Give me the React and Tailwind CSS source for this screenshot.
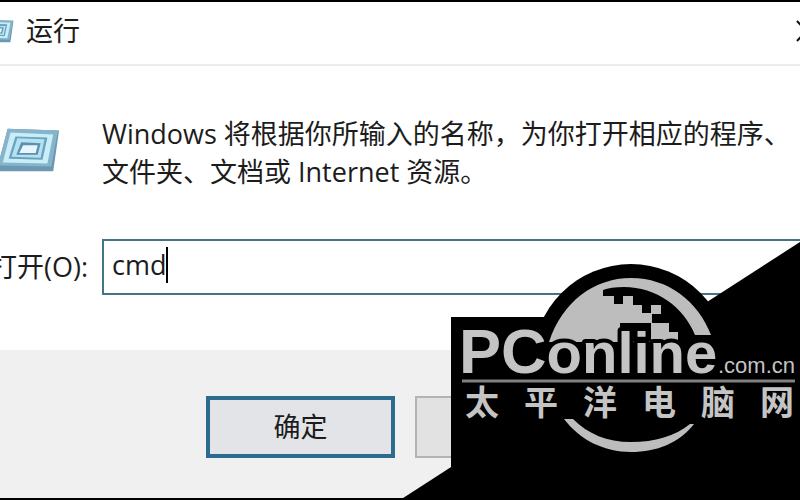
const BRAND_CHARS = ['太', '平', '洋', '电', '脑', '网'];

const RunIcon = ({ className }) => (
    <svg viewBox="0 0 66 46" className={className} aria-hidden="true">
        <path d="M12 1 L65 3 L59 45 L1 45 L2 39 Z" fill="#6b98b3" />
        <path d="M12 1 L64 3 L57 40 L2 39 Z" fill="#86b4ca" />
        <path d="M15 5 L59 7 L53 37 L7 36 Z" fill="#c9eef8" />
        <path d="M20 9 L53 10 L48 33 L13 32 Z" fill="#6ba3bf" />
        <path d="M22 11 L50 12 L46 31 L16 30 Z" fill="#b5e2f0" />
        <path d="M26 15 L46 16 L43 28 L21 28 Z" fill="#5d8fb0" />
        <path d="M28 18 L43 18 L41 26 L24 26 Z" fill="#e6f6fa" />
    </svg>
);

const Watermark = () => (
    <svg
        viewBox="400 240 400 260"
        className="pointer-events-none absolute right-0 -bottom-0.5 w-[400px] h-[260px]"
        role="img"
        aria-label="PConline.com.cn 太平洋电脑网"
    >
        <path d="M800 242 L400 500 L800 500 Z" />
        <path d="M451 317 H800 V500 H451 Z" />
        <circle cx="631" cy="362" r="98" />

        {/* globe with the pixelated coast */}
        <path
            fill="#bdbdbd"
            d="M549 342 C562 302 594 278 631 278 C668 278 698 301 711 335 L695 335 C684 307 656 287 624 287 C615 287 608 288 603 290 L603 296 L614 296 L614 304 L623 304 L623 296 L633 296 L633 305 L642 305 L642 313 L651 313 L651 305 L661 305 L661 314 L652 314 L652 323 L669 323 L669 332 L678 332 L678 342 Z"
        />
        <rect x="620" y="323" width="31" height="18" />
        <path
            fill="#bdbdbd"
            d="M564 419 L573 419 C588 434 607 442 631 442 C655 442 675 436 690 424 L694 424 C679 443 657 452 631 452 C604 452 580 440 564 419 Z"
        />

        <g fontFamily="'Liberation Sans', Arial, sans-serif" fill="#c4c4c4">
            <text
                x="459"
                y="373"
                fontWeight="700"
                stroke="#000"
                strokeWidth="8"
                strokeLinejoin="round"
                paintOrder="stroke"
            >
                <tspan fontSize="63">PC</tspan>
                <tspan fontSize="58">online</tspan>
            </text>
            <text x="718" y="373" fontSize="22">.com.cn</text>
        </g>

        <path d="M462 381 H795" stroke="#808080" strokeWidth="3" />

        <g
            fontFamily="'Noto Sans CJK SC', sans-serif"
            fontSize="34"
            fontWeight="700"
            fill="#c4c4c4"
            textAnchor="middle"
        >
            {BRAND_CHARS.map((char, i) => (
                <text key={char} x={482 + i * 59} y="415">{char}</text>
            ))}
        </g>
    </svg>
);

const App = () => {
    return (
        <div className="relative flex min-h-screen flex-col overflow-hidden border-y-2 border-black bg-white font-['Open_Sans','Noto_Sans_CJK_SC',sans-serif] text-[27px] leading-[38px] text-[#1c1c1c]">
            <header className="flex h-16 items-center border-b-2 border-[#e9edee] pb-1">
                <RunIcon className="-ml-5 h-6 w-[34px] shrink-0" />
                <h1 className="ml-3">运行</h1>
                <button type="button" aria-label="关闭" className="ml-auto -mr-4 shrink-0">
                    <svg viewBox="0 0 20 22" className="h-[22px] w-5" aria-hidden="true">
                        <path d="M1 1 L19 21 M19 1 L1 21" stroke="#111" strokeWidth="2" />
                    </svg>
                </button>
            </header>

            <main className="flex-1 pt-[49px]">
                <div className="flex items-start">
                    <RunIcon className="-ml-1 mt-3 h-[46px] w-16 shrink-0" />
                    <p className="ml-[42px] -mr-8">
                        Windows 将根据你所输入的名称，为你打开相应的程序、
                        <br />
                        文件夹、文档或 Internet 资源。
                    </p>
                </div>

                <div className="mt-12 flex items-center">
                    <label htmlFor="command" className="flex w-[88px] shrink-0 justify-end whitespace-nowrap">
                        打开(O):
                    </label>
                    <div className="relative ml-[14px] flex-1">
                        <input
                            id="command"
                            type="text"
                            defaultValue="cmd"
                            className="block h-14 w-full border-2 border-r-0 border-[#427687] bg-white px-2 pb-1.5 outline-none"
                        />
                        <span className="absolute left-16 top-2 h-9 w-[2px] bg-black" />
                    </div>
                </div>
            </main>

            <footer className="flex h-[148px] items-start gap-5 bg-[#f0f0f0] pl-[206px] pt-[46px]">
                <button type="button" className="h-[62px] w-[189px] shrink-0 border-4 border-[#2b6b8e] bg-[#e2e4e7]">
                    确定
                </button>
                <button type="button" className="h-[62px] w-[189px] shrink-0 border-2 border-[#b3b3b3] bg-[#e2e2e2]">
                    取消
                </button>
            </footer>

            <Watermark />
        </div>
    );
};

export default App;
